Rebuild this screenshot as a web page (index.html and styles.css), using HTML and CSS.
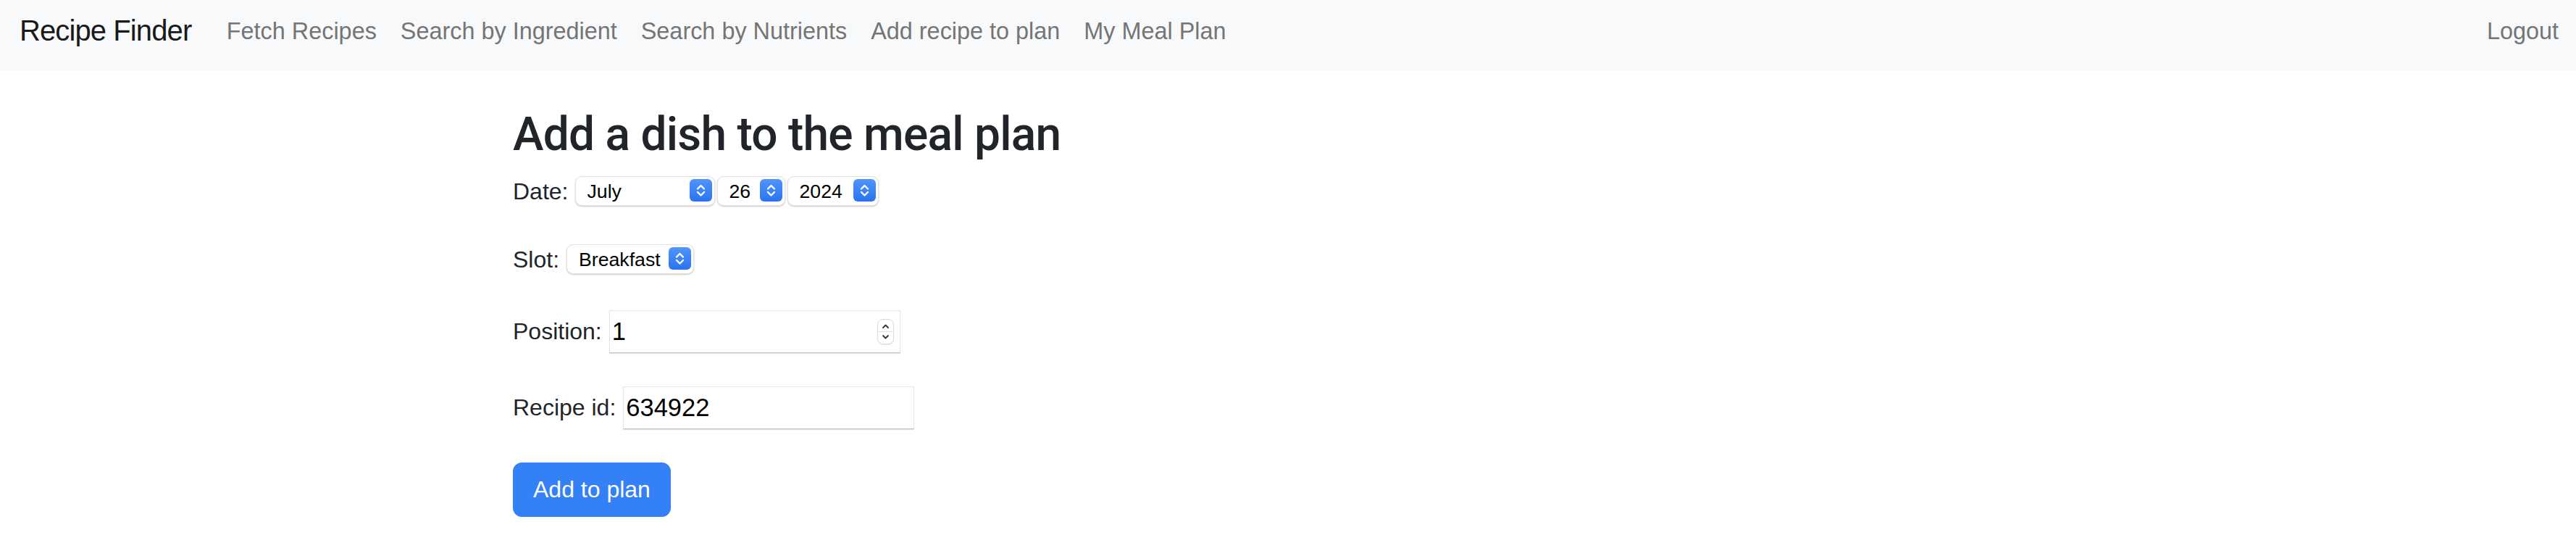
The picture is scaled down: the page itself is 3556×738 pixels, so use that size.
FILE: index.html
```html
<!DOCTYPE html>
<html lang="en">
<head>
<meta charset="utf-8">
<title>Recipe Finder</title>
<link rel="stylesheet" href="styles.css">
</head>
<body>
<nav class="navbar">
  <a class="brand" href="#">Recipe Finder</a>
  <ul class="nav-links">
    <li><a href="#">Fetch Recipes</a></li>
    <li><a href="#">Search by Ingredient</a></li>
    <li><a href="#">Search by Nutrients</a></li>
    <li><a href="#">Add recipe to plan</a></li>
    <li><a href="#">My Meal Plan</a></li>
  </ul>
  <ul class="nav-right">
    <li><a href="#">Logout</a></li>
  </ul>
</nav>

<main class="container">
  <h2 class="title">Add a dish to the meal plan</h2>
  <form class="plan-form">
    <div class="row">
      <label class="lbl">Date:</label>
      <div class="date-group">
        <span class="select-wrap month">
          <select><option>July</option></select>
          <span class="stepper"><svg viewBox="0 0 31 31" width="31" height="31"><path d="M11 13.5 L15.5 9 L20 13.5 M11 18 L15.5 22.5 L20 18" fill="none" stroke="#fff" stroke-width="2.4" stroke-linecap="round" stroke-linejoin="round"/></svg></span>
        </span>
        <span class="select-wrap day">
          <select><option>26</option></select>
          <span class="stepper"><svg viewBox="0 0 31 31" width="31" height="31"><path d="M11 13.5 L15.5 9 L20 13.5 M11 18 L15.5 22.5 L20 18" fill="none" stroke="#fff" stroke-width="2.4" stroke-linecap="round" stroke-linejoin="round"/></svg></span>
        </span>
        <span class="select-wrap year">
          <select><option>2024</option></select>
          <span class="stepper"><svg viewBox="0 0 31 31" width="31" height="31"><path d="M11 13.5 L15.5 9 L20 13.5 M11 18 L15.5 22.5 L20 18" fill="none" stroke="#fff" stroke-width="2.4" stroke-linecap="round" stroke-linejoin="round"/></svg></span>
        </span>
      </div>
    </div>
    <div class="row">
      <label class="lbl">Slot:</label>
      <span class="select-wrap slot">
        <select><option>Breakfast</option></select>
        <span class="stepper"><svg viewBox="0 0 31 31" width="31" height="31"><path d="M11 13.5 L15.5 9 L20 13.5 M11 18 L15.5 22.5 L20 18" fill="none" stroke="#fff" stroke-width="2.4" stroke-linecap="round" stroke-linejoin="round"/></svg></span>
      </span>
    </div>
    <div class="row">
      <label class="lbl">Position:</label>
      <span class="input-wrap">
        <input class="field" type="number" value="1">
        <span class="spin"><svg viewBox="0 0 23 35" width="23" height="35"><path d="M8 12 L11.5 8.5 L15 12" fill="none" stroke="#333" stroke-width="1.8" stroke-linecap="round" stroke-linejoin="round"/><path d="M2 17.5 H21" stroke="#dcdcdc" stroke-width="1"/><path d="M8 23 L11.5 26.5 L15 23" fill="none" stroke="#333" stroke-width="1.8" stroke-linecap="round" stroke-linejoin="round"/></svg></span>
      </span>
    </div>
    <div class="row">
      <label class="lbl">Recipe id:</label>
      <input class="field" type="text" value="634922">
    </div>
    <div class="row">
      <button class="btn-primary" type="button">Add to plan</button>
    </div>
  </form>
</main>
</body>
</html>
```
FILE: styles.css
```css
html, body {
  margin: 0;
  padding: 0;
  background: #fff;
}
body {
  font-family: "Liberation Sans", Arial, sans-serif;
  font-size: 32px;
  line-height: 48px;
  color: #212529;
}
a { text-decoration: none; }

.navbar {
  display: flex;
  align-items: flex-start;
  height: 97px;
  box-sizing: border-box;
  padding: 12px 8px 0 27px;
  background: #f8f9fa;
}
.brand {
  font-size: 40px;
  line-height: 60px;
  letter-spacing: -0.9px;
  color: #1a1a1a;
  margin-right: 32px;
  white-space: nowrap;
}
.nav-links, .nav-right {
  list-style: none;
  margin: 7px 0 0;
  padding: 0;
  display: flex;
}
.nav-right { margin-left: auto; }
.nav-links a, .nav-right a {
  display: block;
  padding: 0 16.5px;
  font-size: 32.4px;
  line-height: 48px;
  color: #757575;
  white-space: nowrap;
}
.nav-right a { padding-right: 16px; }

.container {
  max-width: 2140px;
  margin: 0 auto;
  padding-top: 51px;
}
.title {
  margin: 0 0 15px;
  font-family: Roboto, "Liberation Sans", sans-serif;
  font-weight: 500;
  font-size: 64px;
  line-height: 76.8px;
  color: #212529;
  letter-spacing: -0.75px;
}

.plan-form {
  display: flex;
  flex-direction: column;
  gap: 46px;
}
.row {
  display: flex;
  align-items: center;
  gap: 10px;
  min-height: 48px;
}
.lbl { white-space: nowrap; }

.date-group {
  display: flex;
  gap: 3px;
}
.select-wrap {
  position: relative;
  display: inline-flex;
  height: 41px;
}
.select-wrap select {
  -webkit-appearance: none;
  appearance: none;
  box-sizing: border-box;
  height: 41px;
  width: 100%;
  margin: 0;
  padding: 0 40px 0 15px;
  font-family: "Liberation Sans", Arial, sans-serif;
  font-size: 26.67px;
  color: #000;
  background: #fff;
  border: 1px solid #e2e2e2;
  border-radius: 9px;
  box-shadow: 0 1px 2px rgba(0, 0, 0, 0.22);
  outline: none;
}
.select-wrap.month { width: 193px; }
.select-wrap.day { width: 94px; }
.select-wrap.year { width: 126px; }
.select-wrap.slot { width: 176px; }
.select-wrap.slot select { padding-left: 16px; }
.stepper {
  position: absolute;
  right: 4px;
  top: 4px;
  width: 31px;
  height: 31px;
  border-radius: 6px;
  background: linear-gradient(#4f95fc, #2b73f0);
  pointer-events: none;
}
.stepper svg { display: block; }

.input-wrap {
  position: relative;
  display: inline-flex;
}
.field {
  box-sizing: border-box;
  width: 402px;
  height: 59px;
  margin: 0;
  padding: 0 3px;
  font-family: "Liberation Sans", Arial, sans-serif;
  font-size: 34.5px;
  color: #000;
  background: #fff;
  border: 1px solid #e6e6e6;
  border-bottom-color: #c4c4c4;
  border-radius: 0;
  box-shadow: 0 1px 1px rgba(0, 0, 0, 0.12);
  outline: none;
  -moz-appearance: textfield;
}
.field::-webkit-inner-spin-button,
.field::-webkit-outer-spin-button {
  -webkit-appearance: none;
  margin: 0;
}
.spin {
  position: absolute;
  right: 9px;
  top: 12px;
  width: 23px;
  height: 35px;
  box-sizing: border-box;
  border: 1px solid #dadada;
  border-radius: 8px;
  background: #fff;
  box-shadow: 0 1px 1px rgba(0, 0, 0, 0.08);
  pointer-events: none;
}
.spin svg { display: block; margin: -1px; }

.btn-primary {
  height: 75px;
  padding: 0 27px;
  font-family: "Liberation Sans", Arial, sans-serif;
  font-size: 32px;
  line-height: 48px;
  color: #fff;
  background: #3480f7;
  border: 1px solid #3480f7;
  border-radius: 12px;
  cursor: pointer;
}
```
